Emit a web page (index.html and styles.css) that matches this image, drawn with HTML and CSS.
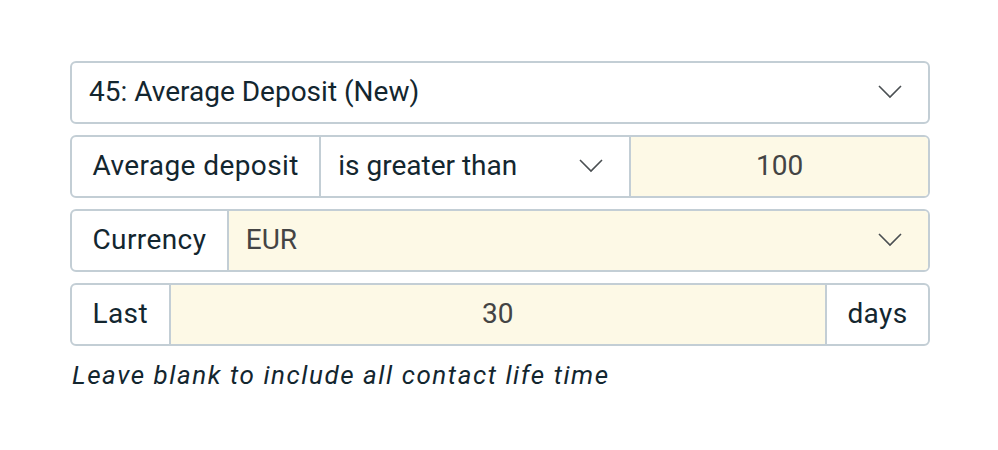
FILE: index.html
```html
<!DOCTYPE html>
<html>
<head>
<meta charset="utf-8">
<link rel="stylesheet" href="styles.css">
</head>
<body>
<div class="form">
  <div class="row">
    <div class="cell select grow">
      <span>45: Average Deposit (New)</span>
      <svg class="chev" width="24" height="14" viewBox="0 0 24 14"><path d="M1 1 L12 12 L23 1" fill="none" stroke="#4a4f52" stroke-width="1.6"/></svg>
    </div>
  </div>
  <div class="row">
    <div class="cell label">Average deposit</div>
    <div class="cell select op">
      <span>is greater than</span>
      <svg class="chev" width="24" height="14" viewBox="0 0 24 14"><path d="M1 1 L12 12 L23 1" fill="none" stroke="#4a4f52" stroke-width="1.6"/></svg>
    </div>
    <div class="cell input grow">100</div>
  </div>
  <div class="row">
    <div class="cell label">Currency</div>
    <div class="cell select yellow grow">
      <span class="val">EUR</span>
      <svg class="chev" width="24" height="14" viewBox="0 0 24 14"><path d="M1 1 L12 12 L23 1" fill="none" stroke="#4a4f52" stroke-width="1.6"/></svg>
    </div>
  </div>
  <div class="row">
    <div class="cell label">Last</div>
    <div class="cell input grow">30</div>
    <div class="cell label">days</div>
  </div>
  <p class="hint">Leave blank to include all contact life time</p>
</div>
</body>
</html>
```
FILE: styles.css
```css
html, body {
  margin: 0;
  padding: 0;
  background: #fff;
}
body {
  font-family: Roboto, "Noto Sans", sans-serif;
  color: #13262f;
}
.form {
  width: 860px;
  margin: 61px 0 0 70px;
  display: flex;
  flex-direction: column;
  gap: 11px;
}
.row {
  display: flex;
  height: 63px;
  box-sizing: border-box;
  border: 2px solid #c3ced5;
  border-radius: 6px;
  overflow: hidden;
}
.cell {
  display: flex;
  align-items: center;
  font-size: 28px;
  box-sizing: border-box;
  padding-bottom: 2px;
}
.cell + .cell {
  border-left: 2px solid #c3ced5;
}
.grow {
  flex: 1;
}
.label {
  padding-left: 20.5px;
  padding-right: 20.5px;
  letter-spacing: 0.4px;
  color: #13262f;
}
.select {
  justify-content: space-between;
  padding-left: 17px;
  padding-right: 26px;
}
.op {
  width: 310px;
}
.yellow {
  background: #fdf9e6;
}
.val {
  color: #444;
}
.input {
  background: #fdf9e6;
  justify-content: center;
  color: #444;
}
.chev {
  display: block;
}
.hint {
  margin: 3px 0 0 2px;
  font-size: 26px;
  letter-spacing: 1.55px;
  font-style: italic;
  color: #13262f;
}
```
